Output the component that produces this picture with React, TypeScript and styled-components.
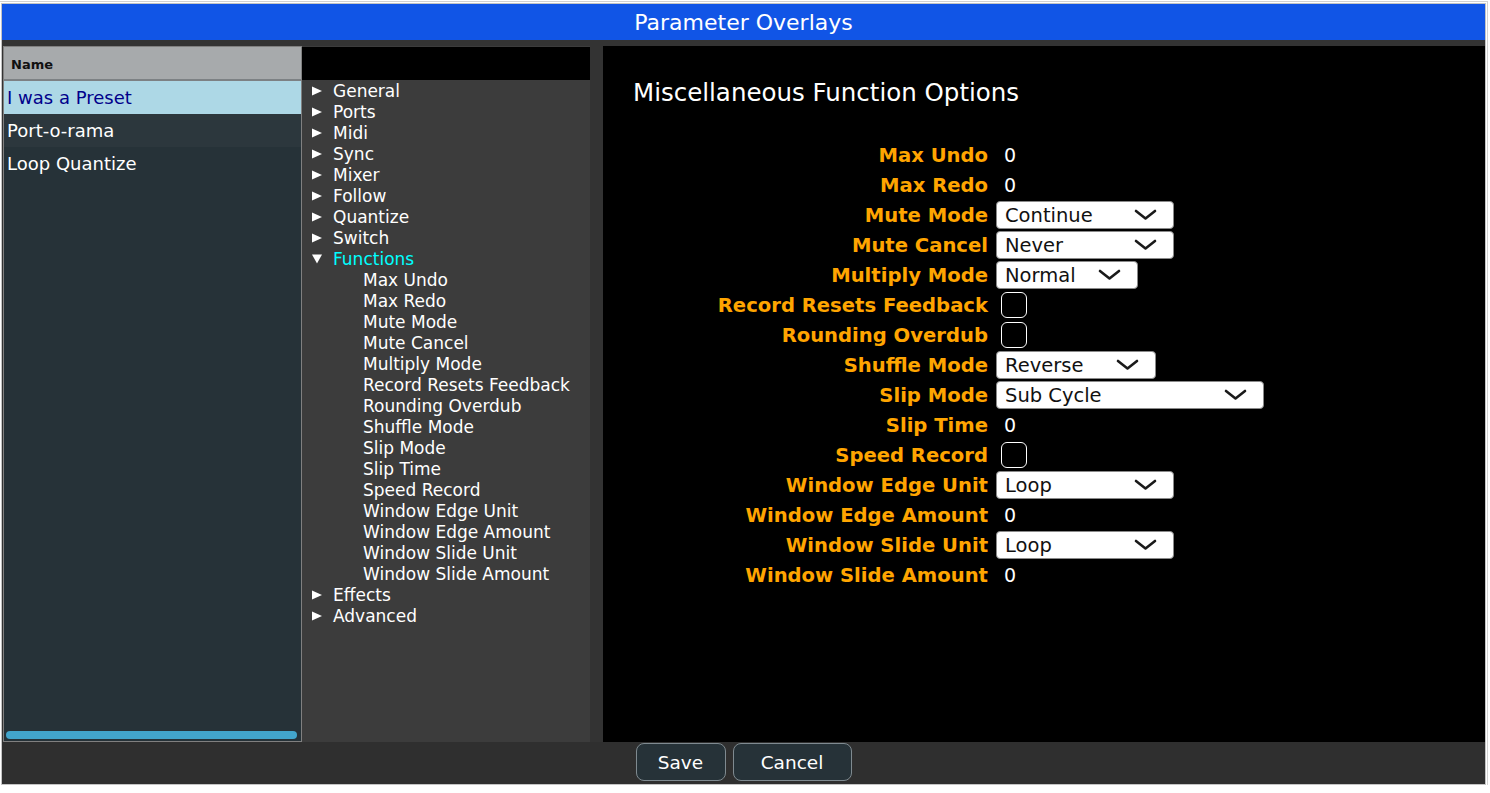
import React from "react";
import styled, { createGlobalStyle } from "styled-components";

const GlobalStyle = createGlobalStyle`
  html, body {
    margin: 0;
    padding: 0;
    background: #ffffff;
    font-family: "DejaVu Sans", Verdana, sans-serif;
  }
  * { box-sizing: border-box; }
`;

const Window = styled.div`
  margin: 3px 0 0 1px;
  width: 1485px;
  height: 782px;
  border: 1px solid #c4c4c4;
  outline: 1px solid #d2d2d2;
  outline-offset: 1px;
  display: flex;
  flex-direction: column;
  background: #333333;
`;

const TitleBar = styled.div`
  height: 36px;
  flex: none;
  background: #1155e6;
  color: #ffffff;
  font-size: 22px;
  display: flex;
  align-items: center;
  justify-content: center;
`;

const Body = styled.div`
  flex: 1;
  display: flex;
  padding: 6px 0 0 1px;
  background: #333333;
  min-height: 0;
`;

const LeftPanel = styled.div`
  width: 299px;
  flex: none;
  border: 1px solid #808080;
  background: #263238;
  display: flex;
  flex-direction: column;
`;

const NameHeader = styled.div`
  height: 34px;
  flex: none;
  background: #a7aaac;
  border-bottom: 2px solid #7d8184;
  color: #111111;
  font-weight: bold;
  font-size: 13px;
  display: flex;
  align-items: center;
  padding-left: 7px;
  padding-top: 2px;
`;

const List = styled.div`
  flex: 1;
`;

const ListRow = styled.div<{ $selected?: boolean; $alt?: boolean }>`
  height: 33px;
  display: flex;
  align-items: center;
  padding-left: 3px;
  font-size: 18px;
  color: ${(p) => (p.$selected ? "#00008b" : "#ffffff")};
  background: ${(p) => (p.$selected ? "#add8e6" : p.$alt ? "#2c373d" : "#263238")};
`;

const ScrollBar = styled.div`
  height: 8px;
  margin: 0 4px 2px 2px;
  border-radius: 4px;
  background: #42a5cc;
  flex: none;
`;

const MiddlePanel = styled.div`
  width: 288px;
  flex: none;
  background: #3c3c3c;
  display: flex;
  flex-direction: column;
`;

const SearchStrip = styled.div`
  height: 33px;
  margin-top: 1px;
  background: #000000;
  flex: none;
`;

const Tree = styled.div`
  display: flex;
  flex-direction: column;
`;

const TreeRow = styled.div<{ $indent?: boolean; $active?: boolean }>`
  height: 21px;
  display: flex;
  align-items: center;
  padding-left: ${(p) => (p.$indent ? "61px" : "10px")};
  font-size: 17px;
  color: ${(p) => (p.$active ? "#00ffff" : "#ffffff")};
  gap: 11px;
  white-space: nowrap;
`;

const Gap = styled.div`
  width: 13px;
  flex: none;
`;

const RightPanel = styled.div`
  flex: 1;
  background: #000000;
  padding: 32px 0 0 30px;
  display: flex;
  flex-direction: column;
`;

const Heading = styled.div`
  color: #ffffff;
  font-size: 24.5px;
  line-height: 30px;
  margin-bottom: 32px;
`;

const Form = styled.div`
  display: grid;
  grid-template-columns: 355px auto;
  grid-auto-rows: 30px;
  column-gap: 8px;
  align-items: center;
  justify-items: start;
`;

const Label = styled.div`
  justify-self: end;
  color: #ffa500;
  font-weight: bold;
  font-size: 19.6px;
  white-space: nowrap;
`;

const Value = styled.div`
  color: #ffffff;
  font-size: 19px;
  padding-left: 8px;
`;

const SelectBox = styled.div<{ $w: number }>`
  width: ${(p) => p.$w}px;
  height: 28px;
  background: #ffffff;
  border: 1px solid #8a8a8a;
  border-radius: 4px;
  display: flex;
  align-items: center;
  justify-content: space-between;
  padding: 0 16px 0 8px;
  color: #111111;
  font-size: 19.5px;
`;

const CheckBox = styled.div`
  width: 26px;
  height: 26px;
  margin-left: 5px;
  border: 1.5px solid #ffffff;
  border-radius: 6px;
  background: #000000;
`;

const Footer = styled.div`
  height: 42px;
  flex: none;
  background: #2f2f2f;
  display: flex;
  justify-content: center;
  align-items: flex-start;
  padding-top: 1px;
  gap: 7px;
`;

const Button = styled.button<{ $w: number }>`
  width: ${(p) => p.$w}px;
  height: 38px;
  background: #263238;
  border: 1px solid #7f8a90;
  border-radius: 8px;
  color: #ffffff;
  font-family: "DejaVu Sans", Verdana, sans-serif;
  font-size: 18.5px;
  padding: 0;
  display: flex;
  align-items: center;
  justify-content: center;
`;

const Chevron = () => (
  <svg width="23" height="12" viewBox="0 0 23 12">
    <polyline
      points="2,2 11.5,9.5 21,2"
      fill="none"
      stroke="#1a1a1a"
      strokeWidth="2.6"
      strokeLinecap="round"
      strokeLinejoin="round"
    />
  </svg>
);

const TriRight = () => (
  <svg width="10" height="10" viewBox="0 0 10 10">
    <polygon points="0,0.5 10,5 0,9.5" fill="#ffffff" />
  </svg>
);

const TriDown = () => (
  <svg width="10" height="10" viewBox="0 0 10 10">
    <polygon points="0,0.5 10,0.5 5,9.5" fill="#ffffff" />
  </svg>
);

type Field =
  | { label: string; kind: "value"; value: string }
  | { label: string; kind: "select"; value: string; width: number }
  | { label: string; kind: "check" };

const fields: Field[] = [
  { label: "Max Undo", kind: "value", value: "0" },
  { label: "Max Redo", kind: "value", value: "0" },
  { label: "Mute Mode", kind: "select", value: "Continue", width: 178 },
  { label: "Mute Cancel", kind: "select", value: "Never", width: 178 },
  { label: "Multiply Mode", kind: "select", value: "Normal", width: 142 },
  { label: "Record Resets Feedback", kind: "check" },
  { label: "Rounding Overdub", kind: "check" },
  { label: "Shuffle Mode", kind: "select", value: "Reverse", width: 160 },
  { label: "Slip Mode", kind: "select", value: "Sub Cycle", width: 268 },
  { label: "Slip Time", kind: "value", value: "0" },
  { label: "Speed Record", kind: "check" },
  { label: "Window Edge Unit", kind: "select", value: "Loop", width: 178 },
  { label: "Window Edge Amount", kind: "value", value: "0" },
  { label: "Window Slide Unit", kind: "select", value: "Loop", width: 178 },
  { label: "Window Slide Amount", kind: "value", value: "0" },
];

const topBefore = ["General", "Ports", "Midi", "Sync", "Mixer", "Follow", "Quantize", "Switch"];
const subItems = fields.map((f) => f.label);
const topAfter = ["Effects", "Advanced"];

export default function App() {
  return (
    <>
      <GlobalStyle />
      <Window>
        <TitleBar>Parameter Overlays</TitleBar>
        <Body>
          <LeftPanel>
            <NameHeader>Name</NameHeader>
            <List>
              <ListRow $selected>I was a Preset</ListRow>
              <ListRow $alt>Port-o-rama</ListRow>
              <ListRow>Loop Quantize</ListRow>
            </List>
            <ScrollBar />
          </LeftPanel>
          <MiddlePanel>
            <SearchStrip />
            <Tree>
              {topBefore.map((t) => (
                <TreeRow key={t}>
                  <TriRight />
                  {t}
                </TreeRow>
              ))}
              <TreeRow $active>
                <TriDown />
                Functions
              </TreeRow>
              {subItems.map((t) => (
                <TreeRow key={t} $indent>
                  {t}
                </TreeRow>
              ))}
              {topAfter.map((t) => (
                <TreeRow key={t}>
                  <TriRight />
                  {t}
                </TreeRow>
              ))}
            </Tree>
          </MiddlePanel>
          <Gap />
          <RightPanel>
            <Heading>Miscellaneous Function Options</Heading>
            <Form>
              {fields.map((f) => (
                <React.Fragment key={f.label}>
                  <Label>{f.label}</Label>
                  {f.kind === "value" && <Value>{f.value}</Value>}
                  {f.kind === "check" && <CheckBox />}
                  {f.kind === "select" && (
                    <SelectBox $w={f.width}>
                      <span>{f.value}</span>
                      <Chevron />
                    </SelectBox>
                  )}
                </React.Fragment>
              ))}
            </Form>
          </RightPanel>
        </Body>
        <Footer>
          <Button $w={90}>Save</Button>
          <Button $w={119}>Cancel</Button>
        </Footer>
      </Window>
    </>
  );
}
